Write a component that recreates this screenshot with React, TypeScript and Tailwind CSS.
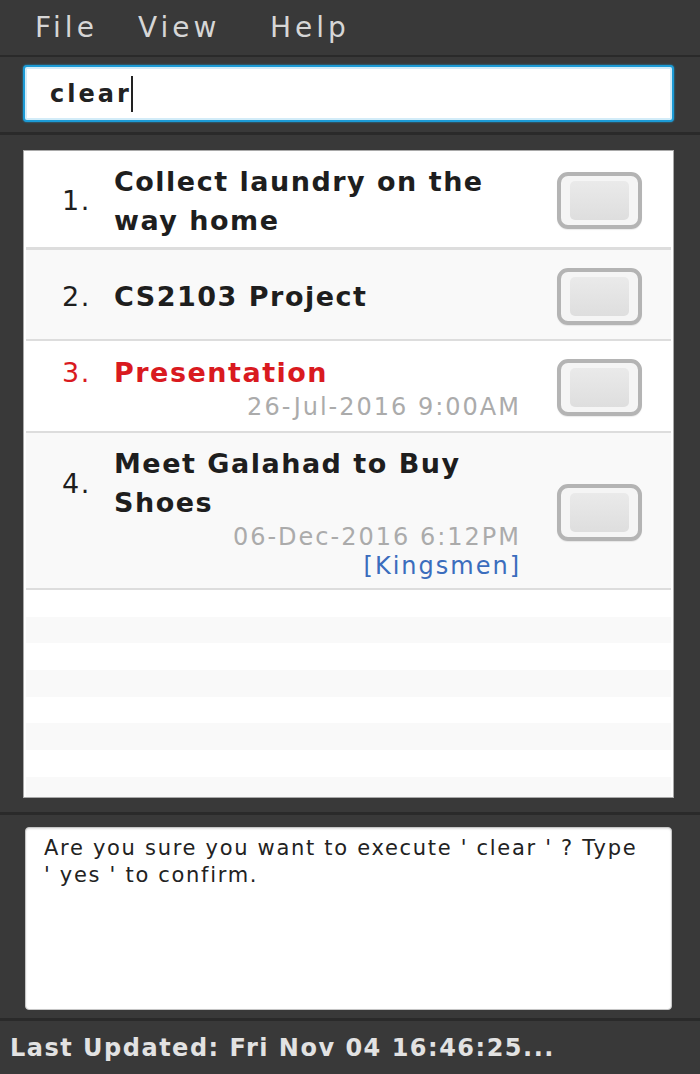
import React from 'react';

type Task = {
  id: number;
  name: string;
  date?: string;
  tags?: string[];
  overdue?: boolean;
  bg: string;
  minH: string;
  sep: string;
};

const tasks: Task[] = [
  { id: 1, name: 'Collect laundry on the way home', bg: 'bg-white', minH: 'min-h-[99px]', sep: 'border-b-[3px]' },
  { id: 2, name: 'CS2103 Project', bg: 'bg-[#f9f9f9]', minH: 'min-h-[91px]', sep: 'border-b-2' },
  { id: 3, name: 'Presentation', date: '26-Jul-2016 9:00AM', overdue: true, bg: 'bg-white', minH: 'min-h-[92px]', sep: 'border-b-2' },
  {
    id: 4,
    name: 'Meet Galahad to Buy Shoes',
    date: '06-Dec-2016 6:12PM',
    tags: ['Kingsmen'],
    bg: 'bg-[#f9f9f9]',
    minH: 'min-h-[157px]',
    sep: 'border-b-2',
  },
];

function Checkbox() {
  return (
    <div className="ml-[36px] h-[57px] w-[85px] flex-shrink-0 rounded-[11px] border-[4px] border-[#b4b4b4] bg-[#f5f5f5] px-[9px] py-[5px] shadow-[0_1px_1px_rgba(0,0,0,0.08)]">
      <div className="h-full w-full rounded-[5px] bg-gradient-to-b from-[#eaeaea] to-[#dedede]" />
    </div>
  );
}

function TaskRow({ task }: { task: Task }) {
  const color = task.overdue ? 'text-[#d91a1f]' : 'text-[#1e1e1e]';
  return (
    <div className={`flex items-center ${task.bg} ${task.minH} ${task.sep} border-[#dddddd] pl-[36px] pr-[26px] pt-[11px] pb-[8px]`}>
      <div className="flex w-[459px] flex-col">
        <div className="flex items-center">
          <span className={`w-[52px] flex-shrink-0 text-[27px] leading-[39px] tracking-[1.5px] ${color}`}>{task.id}.</span>
          <span className={`w-[407px] text-[27px] font-bold leading-[39px] tracking-[1.5px] ${color}`}>{task.name}</span>
        </div>
        {task.date && (
          <div className="text-right text-[24px] leading-[31px] tracking-[2px] text-[#ababab]">{task.date}</div>
        )}
        {task.tags?.map((tag) => (
          <div key={tag} className="text-right text-[24px] leading-[27px] tracking-[2px] text-[#3b6dbd]">
            [{tag}]
          </div>
        ))}
      </div>
      <Checkbox />
    </div>
  );
}

export default function App() {
  return (
    <div
      className="flex h-[1074px] w-[700px] flex-col overflow-hidden bg-[#393939]"
      style={{ fontFamily: '"DejaVu Sans", Verdana, sans-serif' }}
    >
      {/* Menu bar */}
      <div className="flex h-[57px] flex-shrink-0 items-center border-b-2 border-[#2a2a2a] pl-[35px] text-[28px] tracking-[4px] text-[#d6d6d6]">
        <span className="w-[103px]">File</span>
        <span className="w-[132px]">View</span>
        <span>Help</span>
      </div>

      {/* Command box */}
      <div className="flex-shrink-0 border-b-[3px] border-[#2a2a2a] pt-[8px] pb-[10px] pl-[23px] pr-[26px]">
        <div className="flex h-[57px] items-center rounded-[4px] border-2 border-[#1c9bd6] bg-white pl-[25px] shadow-[inset_0_0_0_2px_#d3ecf8,0_0_2px_#1c9bd6]">
          <span className="text-[24px] font-bold tracking-[3px] text-[#222]">clear</span>
          <span className="ml-[-1px] inline-block h-[36px] w-[2px] bg-[#222]" />
        </div>
      </div>

      {/* Task list */}
      <div className="flex-shrink-0 border-b-[3px] border-[#2a2a2a] pt-[15px] pb-[14px] pl-[23px] pr-[26px]">
        <div className="flex h-[648px] flex-col overflow-hidden border border-[#a9a9a9] bg-white px-[2px]">
          {tasks.map((t) => (
            <TaskRow key={t.id} task={t} />
          ))}
          <div className="flex flex-col">
            {Array.from({ length: 9 }).map((_, i) => (
              <div key={i} className={`h-[26.7px] flex-shrink-0 ${i % 2 === 0 ? 'bg-white' : 'bg-[#f9f9f9]'}`} />
            ))}
          </div>
        </div>
      </div>

      {/* Result display */}
      <div className="flex-shrink-0 border-b-[3px] border-[#2a2a2a] pt-[12px] pb-[8px] pl-[25px] pr-[28px]">
        <div className="h-[183px] rounded-[4px] border border-[#c6c6c6] bg-white pl-[18px] pt-[7px] shadow-[inset_0_1px_2px_rgba(0,0,0,0.12)]">
          <p className="text-[21px] leading-[27px] tracking-[1.7px] text-[#222]">
            Are you sure you want to execute ' clear ' ? Type
            <br />' yes ' to confirm.
          </p>
        </div>
      </div>

      {/* Status bar */}
      <div className="flex flex-1 items-center pl-[10px] text-[24px] font-bold tracking-[1.5px] text-[#e2e2e2]">
        Last Updated: Fri Nov 04 16:46:25...
      </div>
    </div>
  );
}
